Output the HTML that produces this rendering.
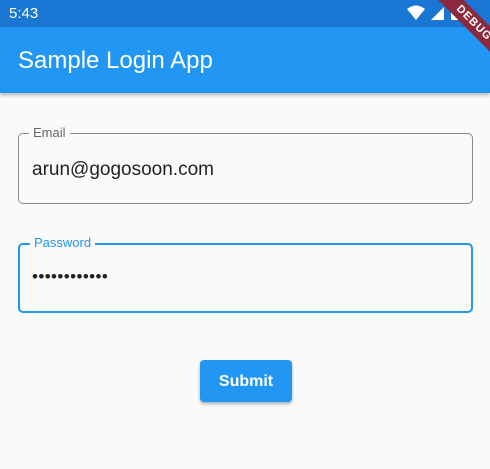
<!DOCTYPE html>
<html><head><meta charset="utf-8"><style>
body{margin:0;width:490px;height:469px;background:#fafafa;font-family:"Liberation Sans",sans-serif;position:relative;overflow:hidden}
.status{position:absolute;left:0;top:0;width:490px;height:27px;background:#1976d2;color:#fff;font-size:15px}
.bar{position:absolute;left:0;top:27px;width:490px;height:66px;background:#2196f3;box-shadow:0 2px 4px rgba(0,0,0,.3)}
.bar span{position:absolute;left:18px;top:20px;color:#fff;font-size:24px}
.field{position:absolute;left:18px;width:455px;box-sizing:border-box;border-radius:5px}
.lbl{position:absolute;top:-9px;left:10px;padding:0 4px;background:#fafafa;font-size:13px}
.val{position:absolute;left:13px;top:24px;font-size:19px;color:#222}
.btn{position:absolute;left:200px;top:360px;width:92px;height:42px;background:#2196f3;border-radius:4px;color:#fff;font-size:16px;font-weight:bold;text-align:center;line-height:44px;box-shadow:0 2px 3px rgba(0,0,0,.3)}
.ribbon{position:absolute;right:-44px;top:14px;width:120px;height:18px;background:#8b2a3f;transform:rotate(45deg);color:#fff;font-size:11px;font-weight:bold;text-align:center;line-height:18px;letter-spacing:1px}
</style></head><body>
<div class="status"><span style="position:absolute;left:9px;top:5px">5:43</span>
<svg style="position:absolute;left:406px;top:4px" width="60" height="18" viewBox="0 0 60 18">
<path d="M1 5 Q10 -2 19 5 L10 16Z" fill="#fff"/>
<path d="M25 16 L38 3 L38 16Z" fill="#fff"/>
<rect x="45" y="3" width="8" height="13" rx="1" fill="#fff"/>
</svg></div>
<div class="bar"><span>Sample Login App</span></div>
<div class="field" style="top:133px;height:71px;border:1px solid #8a8a8a"><div class="lbl" style="color:#666">Email</div><div class="val" style="top:25px">arun@gogosoon.com</div></div>
<div class="field" style="top:243px;height:70px;border:2px solid #2196f3"><div class="lbl" style="color:#2196f3;top:-10px">Password</div><div class="val" style="left:12px;top:22px;font-size:17px;letter-spacing:0.4px">••••••••••••</div></div>
<div class="btn">Submit</div>
<div class="ribbon">DEBUG</div>
</body></html>
